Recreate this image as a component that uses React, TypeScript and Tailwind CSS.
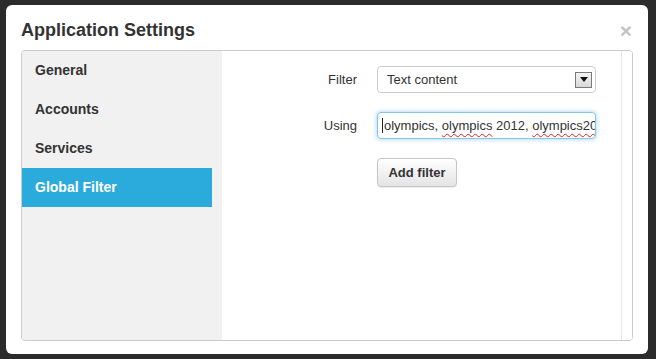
import React from "react";

const font = { fontFamily: '"Liberation Sans", Arial, sans-serif' };

const navItems = ["General", "Accounts", "Services", "Global Filter"];

function SelectArrow() {
  return (
    <span className="flex h-[16px] w-[17px] items-center justify-center border border-[#7a7a7a] bg-gradient-to-b from-[#f4f4f4] to-[#d9d9d9]">
      <svg width="8" height="5" viewBox="0 0 8 5">
        <path d="M0 0h8L4 5z" fill="#111" />
      </svg>
    </span>
  );
}

export default function App() {
  return (
    <div
      className="h-[359px] w-[656px] overflow-hidden bg-[#2b2b2b] pl-[6px] pt-[5px] text-[#333]"
      style={font}
    >
      <div className="flex h-[349px] w-[642px] flex-col rounded-[6px] bg-white">
        <div className="flex h-[45px] items-start justify-between pl-[15px] pr-[16px] pt-[15px]">
          <h1 className="text-[18px] font-bold leading-[20px] text-[#333]">Application Settings</h1>
          <span className="mt-[1px] text-[21px] font-bold leading-[20px] text-[#c4c4c4]">×</span>
        </div>

        <div className="ml-[15px] flex h-[291px] w-[612px] overflow-hidden rounded-[4px] border border-[#cbcbcb]">
          <nav className="w-[200px] shrink-0 bg-[#f1f1f1]">
            {navItems.map((item) => (
              <div
                key={item}
                className={
                  item === "Global Filter"
                    ? "flex h-[39px] w-[190px] items-center bg-[#2babdc] pl-[13px] text-[14px] font-bold text-white"
                    : "flex h-[39px] w-[190px] items-center pl-[13px] text-[14px] font-bold text-[#333]"
                }
              >
                {item}
              </div>
            ))}
          </nav>

          <div className="flex-1 border-r border-[#e8e8e8] pt-[15px]">
            <div className="flex items-center">
              <label className="w-[155px] pr-[20px] text-right text-[13px]">Filter</label>
              <div className="flex h-[27px] w-[219px] items-center justify-between rounded-[4px] border border-[#cccccc] bg-white pl-[9px] pr-[3px] text-[13px] text-[#333]">
                <span>Text content</span>
                <SelectArrow />
              </div>
            </div>

            <div className="mt-[19px] flex items-center">
              <label className="w-[155px] pr-[20px] text-right text-[13px]">Using</label>
              <div className="flex h-[27px] w-[219px] items-center overflow-hidden whitespace-nowrap rounded-[4px] border border-[#7fc8e6] bg-white pl-[4px] text-[13px] shadow-[0_0_5px_rgba(82,168,236,0.55)]">
                <span className="mr-[1px] inline-block h-[15px] w-[1px] shrink-0 bg-[#222]" />
                <span>
                  olympics,{" "}
                  <span className="underline decoration-[#e02020] decoration-wavy decoration-1 underline-offset-[3px]">olympics</span>{" "}
                  2012,{" "}
                  <span className="underline decoration-[#e02020] decoration-wavy decoration-1 underline-offset-[3px]">olympics2012</span>
                </span>
              </div>
            </div>

            <div className="mt-[19px] flex">
              <div className="w-[155px]" />
              <button className="h-[29px] w-[80px] rounded-[4px] border border-[#c5c5c5] bg-gradient-to-b from-white to-[#e4e4e4] text-[13px] font-bold text-[#333] shadow-[0_1px_1px_rgba(0,0,0,0.08)]">
                Add filter
              </button>
            </div>
          </div>
          <div className="w-[10px] shrink-0 bg-white" />
        </div>
      </div>
    </div>
  );
}
